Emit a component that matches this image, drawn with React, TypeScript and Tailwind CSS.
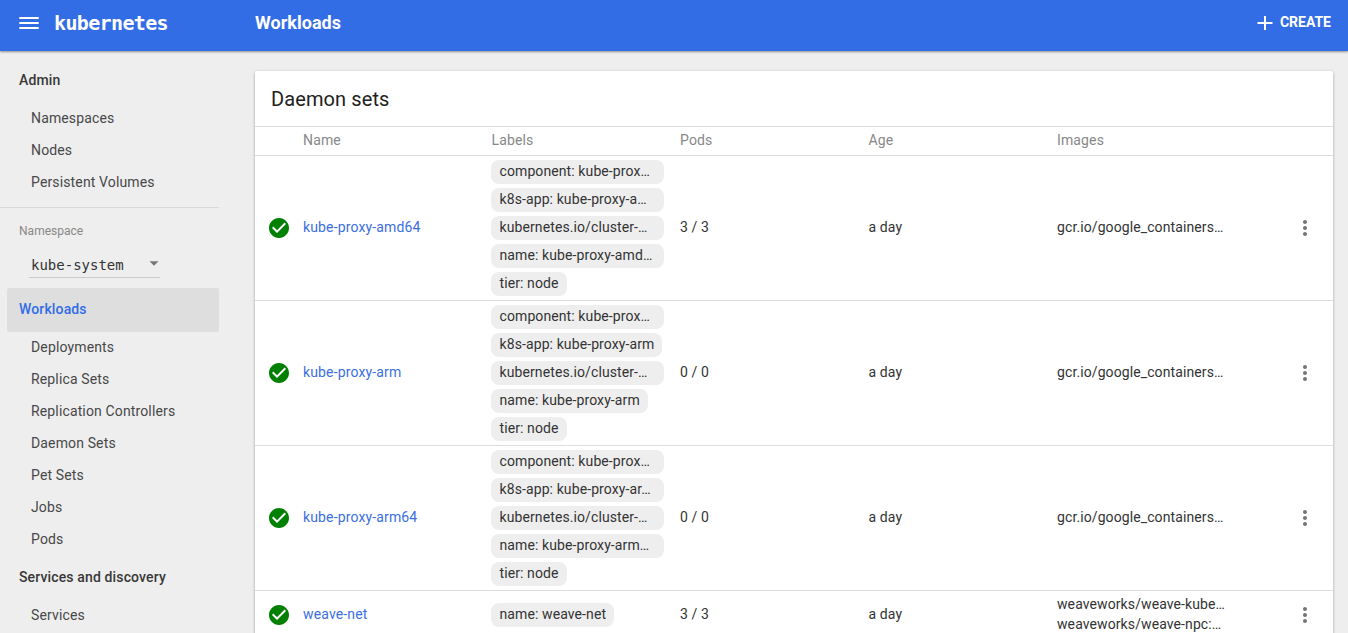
import React from "react";

const daemonSets = [
  {
    name: "kube-proxy-amd64",
    labels: ["component: kube-prox…", "k8s-app: kube-proxy-a…", "kubernetes.io/cluster-…", "name: kube-proxy-amd…", "tier: node"],
    full: [true, true, true, true, false],
    pods: "3 / 3",
    images: ["gcr.io/google_containers…"],
  },
  {
    name: "kube-proxy-arm",
    labels: ["component: kube-prox…", "k8s-app: kube-proxy-arm", "kubernetes.io/cluster-…", "name: kube-proxy-arm", "tier: node"],
    full: [true, false, true, false, false],
    pods: "0 / 0",
    images: ["gcr.io/google_containers…"],
  },
  {
    name: "kube-proxy-arm64",
    labels: ["component: kube-prox…", "k8s-app: kube-proxy-ar…", "kubernetes.io/cluster-…", "name: kube-proxy-arm…", "tier: node"],
    full: [true, true, true, true, false],
    pods: "0 / 0",
    images: ["gcr.io/google_containers…"],
  },
  {
    name: "weave-net",
    labels: ["name: weave-net"],
    full: [false],
    pods: "3 / 3",
    images: ["weaveworks/weave-kube…", "weaveworks/weave-npc:…"],
  },
];

const columns = "grid grid-cols-[48px_188.5px_188.5px_188.5px_188.5px_1fr_56px]";

function NavItem({ label }: { label: string }) {
  return <a className="flex h-8 items-center pb-[3px] pl-[31px] text-[#484848]">{label}</a>;
}

function NavTitle({ label }: { label: string }) {
  return <div className="flex h-11 items-center pb-[3px] pl-[19px] font-medium text-[#383838]">{label}</div>;
}

function CheckIcon() {
  return (
    <svg className="h-6 w-6" viewBox="0 0 24 24" fill="#008000">
      <path d="M12 2C6.48 2 2 6.48 2 12s4.48 10 10 10 10-4.48 10-10S17.52 2 12 2zm-2 15l-5-5 1.41-1.41L10 14.17l7.59-7.59L19 8l-9 9z" />
    </svg>
  );
}

function MoreIcon() {
  return (
    <svg className="h-6 w-6" viewBox="0 0 24 24" fill="#757575">
      <path d="M12 8c1.100 0 2-.9 2-2s-.9-2-2-2-2 .9-2 2 .9 2 2 2zm0 2c-1.100 0-2 .9-2 2s.9 2 2 2 2-.9 2-2-.9-2-2-2zm0 6c-1.100 0-2 .9-2 2s.9 2 2 2 2-.9 2-2-.9-2-2-2z" />
    </svg>
  );
}

export default function App() {
  return (
    <div className="flex h-[633px] w-[1348px] flex-col overflow-hidden bg-[#eee] font-['Roboto',sans-serif] text-sm tracking-[0.14px] text-[#333]">
      <header className="relative flex h-[51px] shrink-0 items-center bg-[#326de6] pb-[5px] text-white shadow-[0_1px_2px_rgba(0,0,0,0.4)]">
        <div className="flex w-[255px] items-center pl-[17px]">
          <svg className="h-6 w-6" viewBox="0 0 24 24" fill="currentColor">
            <path d="M2.300 16h19.400v2H2.300zM2.300 11h19.400v2H2.300zM2.300 6h19.400v2H2.300z" />
          </svg>
          <span className="pl-[13px] font-['DejaVu_Sans_Mono',monospace] text-[20px] leading-6 font-bold tracking-[-0.64px]">kubernetes</span>
        </div>
        <h1 className="flex-1 text-[18px] leading-6 font-bold tracking-[0.02px]">Workloads</h1>
        <button className="flex items-center pr-[17px] font-bold tracking-normal">
          <svg className="mr-[7px] h-4 w-4" viewBox="0 0 16 16" fill="currentColor">
            <path d="M.5 7h6.500V1h2v6h6.500v2H9v6H7V9H.5z" />
          </svg>
          <span className="pb-0.5">CREATE</span>
        </button>
      </header>

      <div className="flex min-h-0 flex-1">
        <nav className="w-[219px] shrink-0 pt-2">
          <NavTitle label="Admin" />
          <NavItem label="Namespaces" />
          <NavItem label="Nodes" />
          <NavItem label="Persistent Volumes" />
          <div className="mt-2 h-px bg-[#d9d9d9]" />
          <div className="pt-[15px] pl-[19px] text-xs leading-4 tracking-[0.02px] text-[#888]">Namespace</div>
          <div className="mt-[14px] ml-[29px] flex h-[25px] w-[131px] justify-between border-b border-[#ccc] pr-px pl-[2px]">
            <span className="font-['DejaVu_Sans_Mono',monospace] text-sm leading-[25px] tracking-normal">kube-system</span>
            <svg className="mt-2 h-[5px] w-[10px]" viewBox="0 0 10 5" fill="#777">
              <path d="M.5.300h9L5 4.800z" />
            </svg>
          </div>
          <div className="mt-[10px] ml-[7px] flex h-11 items-center rounded-[2px] bg-[#dedede] pb-[3px] pl-3 font-medium text-[#326de6]">Workloads</div>
          <NavItem label="Deployments" />
          <NavItem label="Replica Sets" />
          <NavItem label="Replication Controllers" />
          <NavItem label="Daemon Sets" />
          <NavItem label="Pet Sets" />
          <NavItem label="Jobs" />
          <NavItem label="Pods" />
          <NavTitle label="Services and discovery" />
          <NavItem label="Services" />
        </nav>

        <main className="pt-5 pl-9">
          <section className="h-[620px] w-[1078px] rounded-[2px] bg-white shadow-[0_1px_3px_rgba(0,0,0,0.35)]">
            <h2 className="flex h-14 items-center border-b border-[#ddd] pt-[2px] pl-4 text-[20px] tracking-[0.1px] text-[#212121]">Daemon sets</h2>
            <div className={`${columns} h-[29px] items-center border-b border-[#ddd] pb-[3px] text-[#888]`}>
              <span />
              <span>Name</span>
              <span>Labels</span>
              <span>Pods</span>
              <span>Age</span>
              <span>Images</span>
            </div>
            {daemonSets.map((set) => (
              <div key={set.name} className={`${columns} min-h-[49px] items-center border-b border-[#ddd] py-1 tracking-[0.1px]`}>
                <span className="pl-3"><CheckIcon /></span>
                <a className="pb-[3px] tracking-[0.14px] text-[#3b6fe3]">{set.name}</a>
                <div className="-ml-[0.5px] flex flex-col items-start gap-1">
                  {set.labels.map((label, i) => (
                    <span key={label} className={`flex h-6 items-center rounded-[8px] bg-[#eee] pr-2 pb-[3px] pl-[8.5px] whitespace-nowrap ${set.full[i] ? "w-[173px]" : ""}`}>{label}</span>
                  ))}
                </div>
                <span className="pb-[3px]">{set.pods}</span>
                <span className="pb-[3px]">a day</span>
                <div className="-my-1 pb-[3px] leading-5 whitespace-nowrap">
                  {set.images.map((image) => <div key={image}>{image}</div>)}
                </div>
                <button className="pl-4"><MoreIcon /></button>
              </div>
            ))}
          </section>
        </main>
      </div>
    </div>
  );
}
